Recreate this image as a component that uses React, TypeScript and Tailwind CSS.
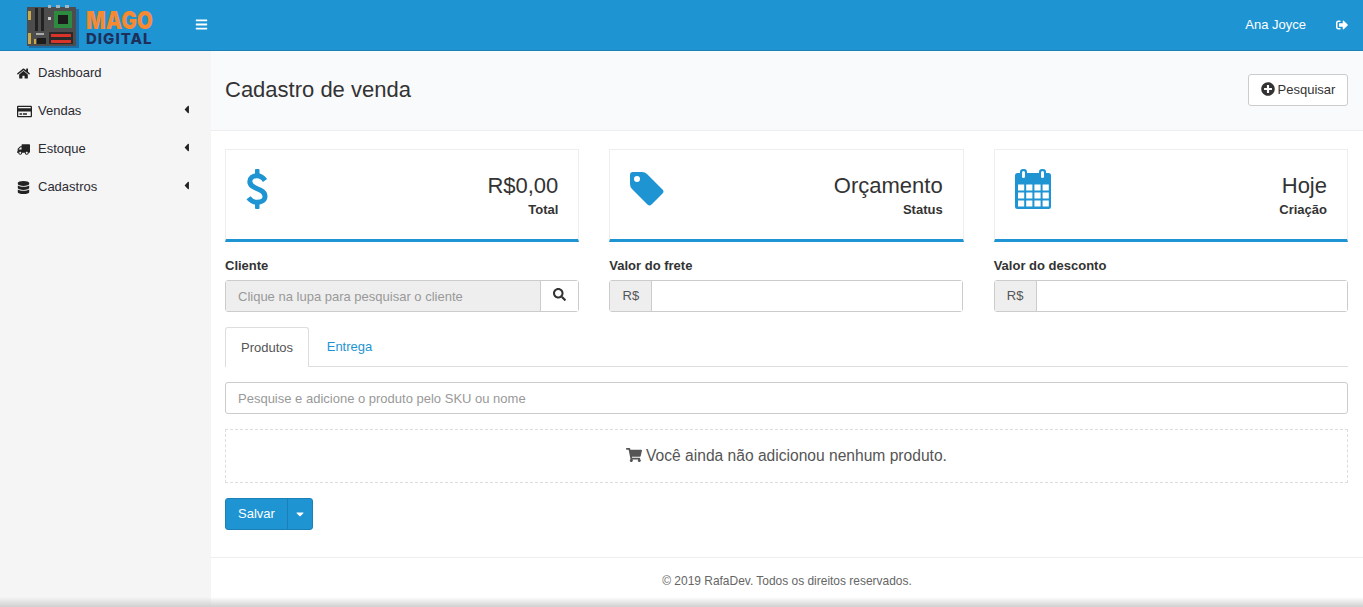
import React from 'react';
import {
  FaBars,
  FaCaretDown,
  FaCaretLeft,
  FaDatabase,
  FaHome,
  FaPlusCircle,
  FaRegCreditCard,
  FaSearch,
  FaShoppingCart,
  FaSignOutAlt,
  FaTruck,
} from 'react-icons/fa';

function BoardLogo() {
  return (
    <svg width="53" height="43" viewBox="0 0 53 43" className="mt-[2px] shrink-0">
      <rect x="2" y="4" width="50" height="39" fill="#1a6fa8" />
      <rect x="0" y="2" width="49" height="39" fill="#4d4d4d" />
      <rect x="21" y="0" width="3" height="3" fill="#9fb6c4" />
      <rect x="29" y="0" width="4" height="3" fill="#9fb6c4" />
      <rect x="38" y="0" width="4" height="3" fill="#9fb6c4" />
      <rect x="8" y="3" width="3" height="23" fill="#222" />
      <rect x="14" y="3" width="3" height="23" fill="#222" />
      <rect x="1" y="6" width="3" height="9" fill="#c9a94a" />
      <rect x="1" y="28" width="3" height="11" fill="#c9a94a" />
      <rect x="27" y="6" width="18" height="17" fill="#2d8a3e" />
      <rect x="31" y="10" width="10" height="9" fill="#1c1c1c" />
      <rect x="22" y="27" width="24" height="12" fill="#2a2a2a" />
      <rect x="24" y="29" width="20" height="3" fill="#d8342a" />
      <rect x="24" y="35" width="20" height="3" fill="#d8342a" />
      <rect x="10" y="33" width="9" height="6" fill="#1c1c1c" />
      <rect x="7" y="34" width="2" height="5" fill="#c9a94a" />
      <rect x="21" y="12" width="3" height="3" fill="#ccc" />
      <rect x="9" y="28" width="8" height="2" fill="#aaa" />
    </svg>
  );
}

function DollarIcon() {
  return (
    <svg width="22" height="40" viewBox="0 0 22 40" fill="none" className="block">
      <path
        d="M19 11.5C17 8.5 14 6.8 11 6.8C6.5 6.8 3.8 9.2 3.8 12.6C3.8 21 19 18.4 19 27.4C19 31 15.5 33.2 11 33.2C7.5 33.2 4.5 31.5 2.5 28.8"
        stroke="currentColor"
        strokeWidth="5"
      />
      <rect x="9" y="0" width="4.5" height="7" rx="1" fill="currentColor" />
      <rect x="9" y="33" width="4.5" height="7" rx="1" fill="currentColor" />
    </svg>
  );
}

function TagIcon() {
  return (
    <svg width="34" height="34" viewBox="0 0 34 34" className="block">
      <path
        fill="currentColor"
        fillRule="evenodd"
        d="M3 0H12Q15 0 17 2L32.5 17.5Q34.5 19.5 32.5 21.5L21.5 32.5Q19.5 34.5 17.5 32.5L2 17Q0 15 0 12V3Q0 0 3 0ZM7 4A3 3 0 1 0 7 10A3 3 0 1 0 7 4Z"
      />
    </svg>
  );
}

function CalendarIcon() {
  const cols = [3, 11.2, 19.4, 27.6];
  const rows = [15.5, 23.5, 31.5];
  return (
    <svg width="36" height="40" viewBox="0 0 36 40" className="block">
      <rect x="0" y="4" width="36" height="36" rx="2.5" fill="currentColor" />
      <rect x="5" y="0" width="7" height="11" rx="3" fill="currentColor" />
      <rect x="24" y="0" width="7" height="11" rx="3" fill="currentColor" />
      <rect x="7" y="2" width="3" height="7" rx="1.5" fill="#fff" />
      <rect x="26" y="2" width="3" height="7" rx="1.5" fill="#fff" />
      {rows.map((y) =>
        cols.map((x) => <rect key={`${x}-${y}`} x={x} y={y} width="6.2" height="6" fill="#fff" />),
      )}
    </svg>
  );
}

function SideItem({ icon, label, caret }: { icon: React.ReactNode; label: string; caret?: boolean }) {
  return (
    <div className="flex h-[38px] items-center pl-[17px] pr-[18px] text-[13px] text-[#2b2b33]">
      <span className="flex w-[21px] text-[13px] text-[#222]">{icon}</span>
      <span>{label}</span>
      {caret && <FaCaretLeft className="ml-auto mb-1 text-[13px] text-[#222]" />}
    </div>
  );
}

function InfoCard({ icon, value, label, iconTop }: { icon: React.ReactNode; value: string; label: string; iconTop: string }) {
  return (
    <div className="flex h-[93px] items-start justify-between border border-b-[3px] border-[#eeeeee] border-b-[#1e94d3] pl-5 pr-5">
      <div className={`${iconTop} text-[#1e94d3]`}>{icon}</div>
      <div className="pt-[22px] text-right">
        <div className="text-[22px] leading-[28px] text-[#333]">{value}</div>
        <div className="mt-[2px] text-[13px] font-bold leading-[16px] text-[#333]">{label}</div>
      </div>
    </div>
  );
}

function MoneyField({ label, wide }: { label: string; wide?: boolean }) {
  return (
    <div>
      <div className="mb-[5px] text-[13px] font-bold leading-[18px] text-[#333]">{label}</div>
      <div className={wide ? 'flex h-[32px] w-full rounded-[3px] border border-[#cccccc]' : 'flex h-[32px] w-[calc(100%-1px)] rounded-[3px] border border-[#cccccc]'}>
        <span className="flex w-[42px] items-center justify-center border-r border-[#cccccc] bg-[#eeeeee] text-[13px] text-[#555]">
          R$
        </span>
        <input className="min-w-0 flex-1 bg-white outline-none" />
      </div>
    </div>
  );
}

export default function App() {
  return (
    <div className="relative flex h-[607px] flex-col overflow-hidden bg-white font-['Liberation_Sans',Arial,sans-serif]">
      {/* Top bar */}
      <header className="flex h-[51px] shrink-0 items-center border-b border-[#1a80b6] bg-[#1e94d3] text-white">
        <div className="flex w-[211px] items-center">
          <div className="ml-[27px] flex w-[127px] items-center gap-[6px]">
            <BoardLogo />
            <div className="flex flex-col pt-[4px] font-['Inter',sans-serif]">
              <span className="origin-left scale-x-[0.86] text-[24px] font-black leading-[23px] text-[#f58a33]">MAGO</span>
              <span className="text-[15px] font-extrabold leading-[14px] tracking-[1px] text-[#1f2f5c]">DIGITAL</span>
            </div>
          </div>
          <FaBars className="mb-[2px] ml-[41px] text-[13px]" />
        </div>
        <div className="ml-auto flex items-center pr-[15px] text-[13px]">
          <span>Ana Joyce</span>
          <FaSignOutAlt className="ml-[30px] text-[12px]" />
        </div>
      </header>

      <div className="flex min-h-0 flex-1">
        {/* Sidebar */}
        <aside className="w-[211px] shrink-0 bg-[#f5f5f5] pt-[3px]">
          <SideItem icon={<FaHome />} label="Dashboard" />
          <SideItem icon={<FaRegCreditCard className="text-[15px]" />} label="Vendas" caret />
          <SideItem icon={<FaTruck className="-scale-x-100" />} label="Estoque" caret />
          <SideItem icon={<FaDatabase />} label="Cadastros" caret />
        </aside>

        {/* Main */}
        <main className="flex min-w-0 flex-1 flex-col">
          <div className="flex h-[80px] shrink-0 items-center justify-between border-b border-[#eeeeee] bg-[#f9fafc] pl-[14px] pr-[15px]">
            <h1 className="pb-[2px] text-[22px] font-normal text-[#333]">Cadastro de venda</h1>
            <button className="mb-[1px] flex h-[32px] w-[100px] items-center justify-center gap-[3px] rounded-[3px] border border-[#cccccc] bg-white text-[13px] text-[#333]">
              <FaPlusCircle className="mb-[2px] text-[14px]" />
              Pesquisar
            </button>
          </div>

          <div className="flex-1 pl-[14px] pr-[15px] pt-[18px]">
            <div className="grid grid-cols-3 gap-x-[30px]">
              <InfoCard icon={<DollarIcon />} iconTop="pt-[19px]" value="R$0,00" label="Total" />
              <InfoCard icon={<TagIcon />} iconTop="pt-[22px]" value="Orçamento" label="Status" />
              <InfoCard icon={<CalendarIcon />} iconTop="pt-[19px]" value="Hoje" label="Criação" />
            </div>

            <div className="mt-[15px] grid grid-cols-3 gap-x-[30px]">
              <div>
                <div className="mb-[5px] text-[13px] font-bold leading-[18px] text-[#333]">Cliente</div>
                <div className="flex h-[32px] rounded-[3px] border border-[#cccccc]">
                  <div className="flex flex-1 items-center bg-[#eeeeee] pl-3 pt-[2px] text-[13px] text-[#999]">
                    Clique na lupa para pesquisar o cliente
                  </div>
                  <div className="flex w-[38px] items-center justify-center border-l border-[#cccccc] bg-white pb-[3px] text-[#333]">
                    <FaSearch className="text-[13px]" />
                  </div>
                </div>
              </div>
              <MoneyField label="Valor do frete" />
              <MoneyField label="Valor do desconto" wide />
            </div>

            {/* Tabs */}
            <div className="mt-[15px] flex h-[40px] border-b border-[#dddddd] text-[13px]">
              <div className="flex h-[40px] w-[84px] items-center justify-center rounded-t-[3px] border border-b-0 border-[#dddddd] bg-white text-[#555]">
                Produtos
              </div>
              <div className="flex w-[80px] items-center justify-center pl-[1px] text-[#1e94d3]">Entrega</div>
            </div>

            <div className="mt-[15px] flex h-[32px] items-center rounded-[3px] border border-[#cccccc] pl-3 pt-[2px] text-[13px] text-[#999]">
              Pesquise e adicione o produto pelo SKU ou nome
            </div>

            <div className="mt-[15px] flex h-[54px] items-center justify-center gap-[4px] border border-dashed border-[#dddddd] text-[15.6px] text-[#555]">
              <FaShoppingCart className="mb-[2px] text-[16px]" />
              Você ainda não adicionou nenhum produto.
            </div>

            <div className="mt-[15px] flex h-[32px] w-[88px] rounded-[3px] border border-[#1a80b6] bg-[#1e94d3] text-[13px] text-white">
              <span className="flex w-[62px] items-center justify-center border-r border-[#1a80b6]">Salvar</span>
              <span className="flex flex-1 items-center justify-center">
                <FaCaretDown className="text-[12px]" />
              </span>
            </div>
          </div>

          <footer className="flex h-[50px] shrink-0 items-start justify-center border-t border-[#eeeeee] pt-[15px] text-[11.96px] leading-[16px] text-[#666]">
            © 2019 RafaDev. Todos os direitos reservados.
          </footer>
        </main>
      </div>

      {/* Bottom edge shadow */}
      <div className="pointer-events-none absolute inset-x-0 bottom-0 h-[10px] bg-gradient-to-b from-transparent to-[#d0d0d0]" />
    </div>
  );
}
